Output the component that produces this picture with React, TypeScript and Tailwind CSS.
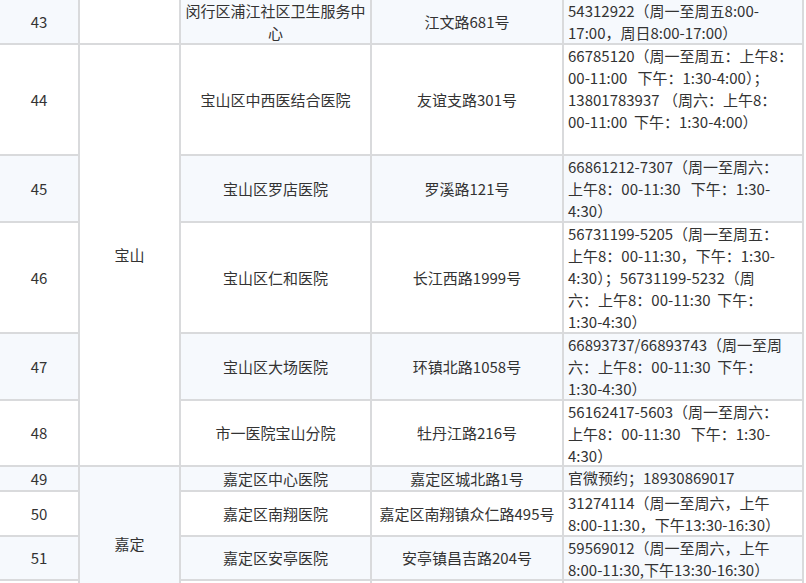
import React from "react";

type Row = {
  no: string;
  name: string[];
  addr: string;
  phone: string[];
  light: boolean;
};

const rows: Row[] = [
  { no: "43", name: ["闵行区浦江社区卫生服务中", "心"], addr: "江文路681号", phone: ["54312922（周一至周五8:00-", "17:00，周日8:00-17:00）"], light: true },
  { no: "44", name: ["宝山区中西医结合医院"], addr: "友谊支路301号", phone: ["66785120（周一至周五：上午8：", "00-11:00   下午：1:30-4:00）；", "13801783937 （周六：上午8：", "00-11:00  下午：1:30-4:00）"], light: false },
  { no: "45", name: ["宝山区罗店医院"], addr: "罗溪路121号", phone: ["66861212-7307（周一至周六：", "上午8：00-11:30   下午：1:30-", "4:30）"], light: true },
  { no: "46", name: ["宝山区仁和医院"], addr: "长江西路1999号", phone: ["56731199-5205（周一至周五：", "上午8：00-11:30，下午：1:30-", "4:30）；56731199-5232（周", "六：上午8：00-11:30  下午：", "1:30-4:30）"], light: false },
  { no: "47", name: ["宝山区大场医院"], addr: "环镇北路1058号", phone: ["66893737/66893743（周一至周", "六：上午8：00-11:30  下午：", "1:30-4:30）"], light: true },
  { no: "48", name: ["市一医院宝山分院"], addr: "牡丹江路216号", phone: ["56162417-5603（周一至周六：", "上午8：00-11:30   下午：1:30-", "4:30）"], light: false },
  { no: "49", name: ["嘉定区中心医院"], addr: "嘉定区城北路1号", phone: ["官微预约；18930869017"], light: true },
  { no: "50", name: ["嘉定区南翔医院"], addr: "嘉定区南翔镇众仁路495号", phone: ["31274114（周一至周六，上午", "8:00-11:30，下午13:30-16:30）"], light: false },
  { no: "51", name: ["嘉定区安亭医院"], addr: "安亭镇昌吉路204号", phone: ["59569012（周一至周六，上午", "8:00-11:30,下午13:30-16:30）"], light: true },
  { no: "", name: [""], addr: "", phone: [""], light: false },
];

const font = { fontFamily: '"Noto Sans CJK SC", "Microsoft YaHei", sans-serif' };

export default function App() {
  const cells: React.ReactNode[] = [];
  rows.forEach((r, i) => {
    const bg = r.light ? "bg-[#f6f9fd]" : "bg-white";
    cells.push(
      <div key={`n${i}`} className={`${bg} flex items-center justify-center`}>
        {r.no}
      </div>
    );
    if (i === 0) {
      cells.push(<div key="d0" className="bg-white" />);
    } else if (i === 1) {
      cells.push(
        <div key="d1" className="row-span-5 bg-white flex items-center justify-center">
          宝山
        </div>
      );
    } else if (i === 6) {
      cells.push(
        <div key="d6" className="row-span-4 bg-[#f6f9fd] flex items-center justify-center">
          嘉定
        </div>
      );
    }
    cells.push(
      <div key={`h${i}`} className={`${bg} flex flex-col items-center justify-center text-center`}>
        {r.name.map((l, j) => (
          <div key={j} className="whitespace-nowrap">{l}</div>
        ))}
      </div>
    );
    cells.push(
      <div key={`a${i}`} className={`${bg} flex items-center justify-center whitespace-nowrap`}>
        {r.addr}
      </div>
    );
    cells.push(
      <div key={`p${i}`} className={`${bg} pl-[4px] flex flex-col`}>
        {r.phone.map((l, j) => (
          <div key={j} className="whitespace-pre">{l}</div>
        ))}
      </div>
    );
  });

  return (
    <div className="w-[806px] h-[583px] overflow-hidden bg-white" style={font}>
      <div className="w-fit bg-[#d9dadc] pr-[2px] grid grid-cols-[78px_99px_189px_190px_238px] grid-rows-[43px_109px_65px_109px_65px_64px_23px_43px_42px_40px] gap-[2px] text-[15px] leading-[22px] text-[#333333]">
        {cells}
      </div>
    </div>
  );
}
